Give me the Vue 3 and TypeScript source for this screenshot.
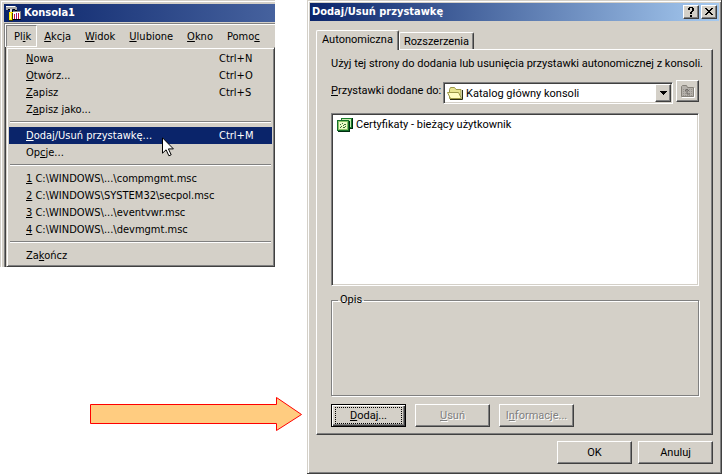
<script setup lang="ts">
import { ref } from 'vue'

interface Label {
  before: string
  key: string
  after: string
}
interface MenuItem {
  label: Label
  shortcut?: string
  active?: boolean
}

// "&" marks the access key that follows it
function parse(text: string): Label {
  const i = text.indexOf('&')
  return i < 0
    ? { before: text, key: '', after: '' }
    : { before: text.slice(0, i), key: text[i + 1], after: text.slice(i + 2) }
}

const menuBar = ['Pl&ik', '&Akcja', '&Widok', '&Ulubione', '&Okno', 'Pomo&c'].map(parse)

const groups: MenuItem[][] = [
  [
    { label: parse('&Nowa'), shortcut: 'Ctrl+N' },
    { label: parse('&Otwórz...'), shortcut: 'Ctrl+O' },
    { label: parse('&Zapisz'), shortcut: 'Ctrl+S' },
    { label: parse('Z&apisz jako...') },
  ],
  [
    { label: parse('&Dodaj/Usuń przystawkę...'), shortcut: 'Ctrl+M', active: true },
    { label: parse('Op&cje...') },
  ],
  [
    { label: parse('&1 C:\\WINDOWS\\...\\compmgmt.msc') },
    { label: parse('&2 C:\\WINDOWS\\SYSTEM32\\secpol.msc') },
    { label: parse('&3 C:\\WINDOWS\\...\\eventvwr.msc') },
    { label: parse('&4 C:\\WINDOWS\\...\\devmgmt.msc') },
  ],
  [{ label: parse('Za&kończ') }],
]

const tabs = ['Autonomiczna', 'Rozszerzenia']
const activeTab = ref(0)
const root = ref('Katalog główny konsoli')
</script>

<template>
  <main class="page">
    <div class="left">
      <section class="console">
        <header class="console-title">
          <svg class="app-icon" viewBox="0 0 16 16" width="16" height="16" shape-rendering="crispEdges" aria-hidden="true">
            <path d="M6 6h9v9H6z" fill="#fff" />
            <path d="M6 6h9v1H6zM14 7h1v8h-1z" fill="#808080" />
            <path d="M8 9h1v5H8zM12 8h1v6h-1z" fill="#d0103c" />
            <path d="M10 8h1v6h-1z" fill="#7a1a9a" />
            <path d="M7 14h8v1H7z" fill="#000" />
            <path d="M1 1h8l2 1v3H8V4H3L1 5H0V1z" fill="#a8a8a8" />
            <path d="M0 1h9v1H0z" fill="#fff" />
            <path d="M2 4h2v1H2zM7 4h2v1H7zM9 5h2v1H9zM6 5h1v2H6z" fill="#000" />
            <path d="M4 4h2v4H4z" fill="#d8d8d8" />
            <path d="M3 7h4v8H3z" fill="#ffe800" />
            <path d="M4 8h1v6H4z" fill="#ffff9c" />
            <path d="M6 8h1v7H6zM3 15h4v1H3z" fill="#3c3800" />
          </svg>
          <h1>Konsola1</h1>
        </header>
        <div class="console-body">
          <nav class="menu-bar">
            <button v-for="(m, i) in menuBar" :key="i" type="button" :class="{ open: i === 0 }">{{ m.before }}<u>{{ m.key }}</u>{{ m.after }}</button>
          </nav>
          <div class="popup">
            <div v-for="(group, g) in groups" :key="g" class="group">
              <button v-for="(item, i) in group" :key="i" type="button" class="item" :class="{ active: item.active }">
                <span>{{ item.label.before }}<u>{{ item.label.key }}</u>{{ item.label.after }}</span>
                <span v-if="item.shortcut" class="shortcut">{{ item.shortcut }}</span>
                <svg v-if="item.active" class="pointer" viewBox="0 0 12 20" width="12" height="20" aria-hidden="true">
                  <path d="M.5 .8v15.4l3.6-3.4 2.8 6 2.3-1-2.8-5.9h5z" fill="#fff" stroke="#000" />
                </svg>
              </button>
            </div>
          </div>
        </div>
      </section>
      <svg class="arrow" viewBox="0 0 212 34" aria-hidden="true">
        <path d="M.5 7.500H186.500V.5L211.500 17.500 186.500 33.500V26.500H.5z" fill="#ffcc80" stroke="#f00" />
      </svg>
    </div>

    <section class="dialog">
      <header class="dialog-title">
        <h2>Dodaj/Usuń przystawkę</h2>
        <button type="button" aria-label="Pomoc">
          <svg viewBox="0 0 12 10" width="12" height="10" shape-rendering="crispEdges"><path d="M3 1h1V0h4v1h1v3H8v1H7v2H5V5h1V4h1V1H5v2H3zM5 8h2v2H5z" /></svg>
        </button>
        <button type="button" class="close" aria-label="Zamknij">
          <svg viewBox="0 0 12 10" width="12" height="10" shape-rendering="crispEdges"><path d="M2 1h2v1h1v1h2V2h1V1h2v1H9v1H8v1H7v1h0v0h1v1h1v1h1v1H8V7H7V6H5v1H4v1H2V7h1V6h1V5h1V4H4V3H3V2H2z" /></svg>
        </button>
      </header>

      <div class="dialog-body">
        <div class="tabs" role="tablist">
          <button v-for="(t, i) in tabs" :key="t" type="button" role="tab" :aria-selected="i === activeTab" :class="{ selected: i === activeTab }" @click="activeTab = i">{{ t }}</button>
        </div>

        <div class="panel" role="tabpanel">
          <p>Użyj tej strony do dodania lub usunięcia przystawki autonomicznej z konsoli.</p>

          <div class="pick-row">
            <label for="root"><u>P</u>rzystawki dodane do:</label>
            <div class="combo">
              <svg class="folder" viewBox="0 0 17 15" width="17" height="15" aria-hidden="true">
                <path d="M2.500 12.500v-9l1-2h4l1.500 2h5v9z" fill="#e8e490" stroke="#9c9848" />
                <path d="M3.500 12.500l-3-6h11l3 6z" fill="#fffcc0" stroke="#9c9848" />
                <path d="M3 13.500h12.500V4" fill="none" stroke="#2c2c10" />
              </svg>
              <select id="root" v-model="root">
                <option>Katalog główny konsoli</option>
              </select>
              <span class="drop" aria-hidden="true">
                <svg viewBox="0 0 7 4" width="7" height="4" shape-rendering="crispEdges"><path d="M0 0h7v1H6v1H5v1H4v1H3V3H2V2H1V1H0z" /></svg>
              </span>
            </div>
            <button type="button" class="up" disabled aria-label="W górę">
              <svg viewBox="0 0 16 14" width="16" height="14" aria-hidden="true">
                <path d="M1.500 12.500v-10l1-1h4l1 2h6v9z" fill="#b4b0aa" stroke="#858179" />
                <path d="M3 5.500h10M3 7.500h10M3 9.500h10M3 11.500h10" stroke="#96928c" stroke-dasharray="1 1" />
                <path d="M7 5v5M5 7l2-2 2 2M7 10h3" fill="none" stroke="#706c68" />
                <path d="M2 13.500h12.500V4" fill="none" stroke="#fff" />
              </svg>
            </button>
          </div>

          <ul class="list">
            <li>
              <svg viewBox="0 0 17 15" width="17" height="15" shape-rendering="crispEdges" aria-hidden="true">
                <path d="M4 1h11v10H4z" fill="#1c7c2c" />
                <path d="M5 2h9v8H5z" fill="#c8ecb0" />
                <path d="M15 1h1v11H6v-1h9z" fill="#002c10" />
                <path d="M0 3h12v11H0z" fill="#147028" />
                <path d="M1 4h10v9H1z" fill="#8cc468" />
                <path d="M2 5h8v7H2z" fill="#ecfcc8" />
                <path d="M3 7h1v1H3zM5 6h1v1H5zM7 7h2v1H7zM4 9h1v1H4zM6 8h1v1H6zM8 9h1v1H8zM3 10h1v1H3zM6 10h2v1H6z" fill="#3c7038" />
                <path d="M12 4h1v11H1v-1h11z" fill="#002c10" />
              </svg>
              Certyfikaty - bieżący użytkownik
            </li>
          </ul>

          <fieldset>
            <legend>Opis</legend>
          </fieldset>

          <div class="actions">
            <button type="button" class="btn default"><span><u>D</u>odaj...</span></button>
            <button type="button" class="btn" disabled><span><u>U</u>suń</span></button>
            <button type="button" class="btn" disabled><span>I<u>n</u>formacje...</span></button>
          </div>
        </div>

        <footer>
          <button type="button" class="btn">OK</button>
          <button type="button" class="btn">Anuluj</button>
        </footer>
      </div>
    </section>
  </main>
</template>

<style>
body {
  margin: 0;
  background: #fff;
}
</style>

<style scoped>
*,
::before {
  box-sizing: border-box;
}
.page {
  display: grid;
  grid-template-columns: minmax(0, 307fr) minmax(0, 415fr);
  padding-right: 1px;
  align-items: start;
  color: #000;
  font: 11px/14px Roboto, "Liberation Sans", sans-serif;
}
button,
select {
  margin: 0;
  padding: 0;
  border: 0;
  border-radius: 0;
  background: #d4d0c8;
  color: inherit;
  font: inherit;
}
h1,
h2,
p,
ul {
  margin: 0;
  padding: 0;
  list-style: none;
}
h1,
h2 {
  color: #fff;
  font: bold 11px/18px "DejaVu Sans Condensed", "DejaVu Sans", sans-serif;
  white-space: nowrap;
}
u {
  text-underline-offset: 1px;
}

/* console window */
.left {
  display: flex;
  flex-direction: column;
  gap: 130px;
}
.console {
  margin-right: 32px;
  padding: 2px 0 0 2px;
  background: #d4d0c8;
  box-shadow: inset 1px 1px #d4d0c8, inset 2px 2px #fff;
  font: 11px/13px "DejaVu Sans Condensed", "DejaVu Sans", sans-serif;
}
.console-title {
  display: flex;
  align-items: center;
  gap: 2px;
  height: 18px;
  margin: 2px 0 0 2px;
  padding-left: 2px;
  background: linear-gradient(90deg, #0a246a, #46629e);
}
.console-body {
  margin: 1px 0 0 2px;
  border-top: 1px solid #808080;
  border-left: 1px solid #808080;
  box-shadow: inset 1px 1px #fff;
  padding: 1px 0 0 1px;
}
.menu-bar {
  display: flex;
  height: 22px;
}
.menu-bar button {
  padding: 0 6px;
  border: 1px solid transparent;
  background: none;
  white-space: nowrap;
}
.menu-bar .open {
  padding: 1px 5px 0 7px;
  border-color: #808080 #fff #fff #808080;
}
.popup {
  border: 1px solid #404040;
  border-top-color: #d4d0c8;
  border-left-color: #d4d0c8;
  box-shadow: inset 1px 1px #fff, inset -1px -1px #808080, -1px 0 #404040;
  padding: 2px;
}
.group + .group::before {
  content: "";
  display: block;
  height: 2px;
  margin: 3px 1px 4px;
  border-top: 1px solid #808080;
  border-bottom: 1px solid #fff;
}
.item {
  position: relative;
  display: flex;
  width: 100%;
  height: 17px;
  padding: 0 19px 0 17px;
  align-items: center;
  justify-content: space-between;
  white-space: nowrap;
}
.shortcut {
  width: 34px;
  text-align: left;
}
.item.active {
  background: #0a246a;
  color: #fff;
}
.pointer {
  position: absolute;
  left: 153px;
  top: 10px;
  z-index: 1;
}
.arrow {
  display: block;
  margin: 0 5px 0 90px;
}

/* snap-in dialog */
.dialog {
  padding: 3px 2px 9px 3px;
  background: #d4d0c8;
  border-right: 1px solid #404040;
  border-bottom: 1px solid #404040;
  box-shadow: inset 1px 1px #d4d0c8, inset 2px 2px #fff, inset -1px -1px #808080;
}
.dialog-title {
  display: flex;
  align-items: center;
  height: 18px;
  padding: 0 2px;
  background: linear-gradient(90deg, #0a246a, #a6caf0);
}
.dialog-title h2 {
  flex: 1;
}
.dialog-title button {
  display: grid;
  place-items: center;
  width: 16px;
  height: 14px;
}
.dialog-title .close {
  margin-left: 2px;
}
.dialog-title button,
.drop,
.up,
.btn {
  background: #d4d0c8;
  border: 1px solid;
  border-color: #fff #404040 #404040 #fff;
  box-shadow: inset -1px -1px #808080;
}
.dialog-body {
  padding: 9px 6px 0;
}
.tabs {
  display: flex;
  align-items: flex-end;
  height: 19px;
}
.tabs button {
  position: relative;
  height: 17px;
  padding: 1px 4px 0;
  border: 1px solid;
  border-color: #fff #404040 transparent #fff;
  border-bottom: 0;
  border-radius: 2px 2px 0 0;
  box-shadow: inset -1px 0 #808080;
}
.tabs .selected {
  z-index: 1;
  height: 20px;
  margin-bottom: -1px;
  padding: 0 5px 2px;
}
.panel {
  border: 1px solid;
  border-color: #fff #404040 #404040 #fff;
  box-shadow: inset -1px -1px #808080;
  padding: 7px 13px 7px 14px;
}
.panel p {
  white-space: nowrap;
}
.pick-row {
  display: flex;
  align-items: flex-start;
  gap: 3px;
  margin-top: 9px;
}
.pick-row label {
  width: 109px;
  padding-top: 4px;
  white-space: nowrap;
}
.combo {
  position: relative;
  flex: 1;
  display: flex;
  height: 22px;
  margin-top: 2px;
  padding: 2px;
  background: #fff;
}
.combo,
.list {
  border: 1px solid;
  border-color: #808080 #fff #fff #808080;
  box-shadow: inset 1px 1px #404040, inset -1px -1px #d4d0c8;
}
.combo select {
  flex: 1;
  min-width: 0;
  padding: 1px 18px 0 20px;
  appearance: none;
  background: transparent;
}
.folder {
  position: absolute;
  left: 3px;
  top: 3px;
}
.drop {
  position: absolute;
  right: 1px;
  top: 1px;
  bottom: 1px;
  width: 16px;
  display: grid;
  place-items: center;
  pointer-events: none;
}
.up {
  display: grid;
  place-items: center;
  width: 23px;
  height: 22px;
}
.list {
  height: 173px;
  margin-top: 9px;
  padding: 3px 5px;
  background: #fff;
}
.list li {
  display: flex;
  align-items: center;
  gap: 2px;
}
fieldset {
  height: 103px;
  margin: 7px 0 0;
  padding: 0 6px;
  border: 1px solid #808080;
  box-shadow: 1px 1px #fff, inset 1px 1px #fff;
}
legend {
  padding: 0 2px;
}
.actions {
  display: flex;
  gap: 9px;
  margin-top: 8px;
}
.left {
  gap: 130px;
}
.btn {
  width: 75px;
  height: 23px;
}
.btn:disabled {
  color: #808080;
  text-shadow: 1px 1px #fff;
}
.default {
  padding: 2px;
  border-color: #000;
  box-shadow: inset 1px 1px #fff, inset -1px -1px #404040, inset -2px -2px #808080;
}
.default span {
  display: block;
  margin: 0 1px;
  border: 1px dotted #000;
  line-height: 15px;
}
footer {
  display: flex;
  justify-content: flex-end;
  gap: 6px;
  margin-top: 6px;
}
</style>
